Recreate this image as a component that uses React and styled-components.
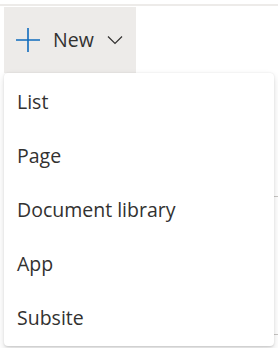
import React from 'react'
import styled, { createGlobalStyle } from 'styled-components'

const GlobalStyle = createGlobalStyle`
  html, body {
    margin: 0;
    padding: 0;
    background: #ffffff;
    font-family: 'Segoe UI', 'Open Sans', 'Noto Sans', sans-serif;
    color: #323130;
  }
`

const Page = styled.div`
  position: relative;
  width: 278px;
  height: 348px;
  overflow: hidden;
  background: #ffffff;
`

const TopRule = styled.div`
  height: 6px;
  border-bottom: 2px solid #edebe9;
  box-sizing: border-box;
`

const Toolbar = styled.div`
  display: flex;
  padding-left: 4px;
  margin-top: 1px;
`

const NewButton = styled.button`
  display: flex;
  align-items: center;
  height: 66px;
  width: 132px;
  padding: 0 0 0 12px;
  border: none;
  background: #edebe9;
  font-family: inherit;
  font-size: 19.5px;
  color: #323130;
  cursor: pointer;
`

const Label = styled.span`
  margin-left: 13px;
  margin-right: 13px;
  line-height: 1;
`

const Menu = styled.ul`
  position: absolute;
  left: 4px;
  top: 73px;
  width: 270px;
  margin: 0;
  padding: 1px 0 2px;
  list-style: none;
  background: #ffffff;
  border-radius: 4px;
  box-shadow: 0 3.2px 7.2px rgba(0, 0, 0, 0.13), 0 0.6px 1.8px rgba(0, 0, 0, 0.11);
`

const Item = styled.li`
  display: flex;
  align-items: center;
  height: 54px;
  padding-left: 13px;
  font-size: 19.5px;
  color: #323130;
`

const PageRule = styled.div`
  position: absolute;
  right: 0;
  top: ${p => p.$top}px;
  width: 6px;
  height: 1px;
  background: #c8c6c4;
`

const PlusIcon = () => (
  <svg width="24" height="24" viewBox="0 0 24 24">
    <path d="M12 0v24M0 12h24" stroke="#0f6cbd" strokeWidth="1.6" fill="none" />
  </svg>
)

const Chevron = () => (
  <svg width="16" height="10" viewBox="0 0 16 10">
    <path d="M1 1.5l7 7 7-7" stroke="#323130" strokeWidth="1.2" fill="none" />
  </svg>
)

const items = ['List', 'Page', 'Document library', 'App', 'Subsite']

export default function App() {
  return (
    <Page>
      <GlobalStyle />
      <TopRule />
      <Toolbar>
        <NewButton>
          <PlusIcon />
          <Label>New</Label>
          <Chevron />
        </NewButton>
      </Toolbar>
      <PageRule $top={196} />
      <PageRule $top={334} />
      <Menu>
        {items.map(item => (
          <Item key={item}>{item}</Item>
        ))}
      </Menu>
    </Page>
  )
}
